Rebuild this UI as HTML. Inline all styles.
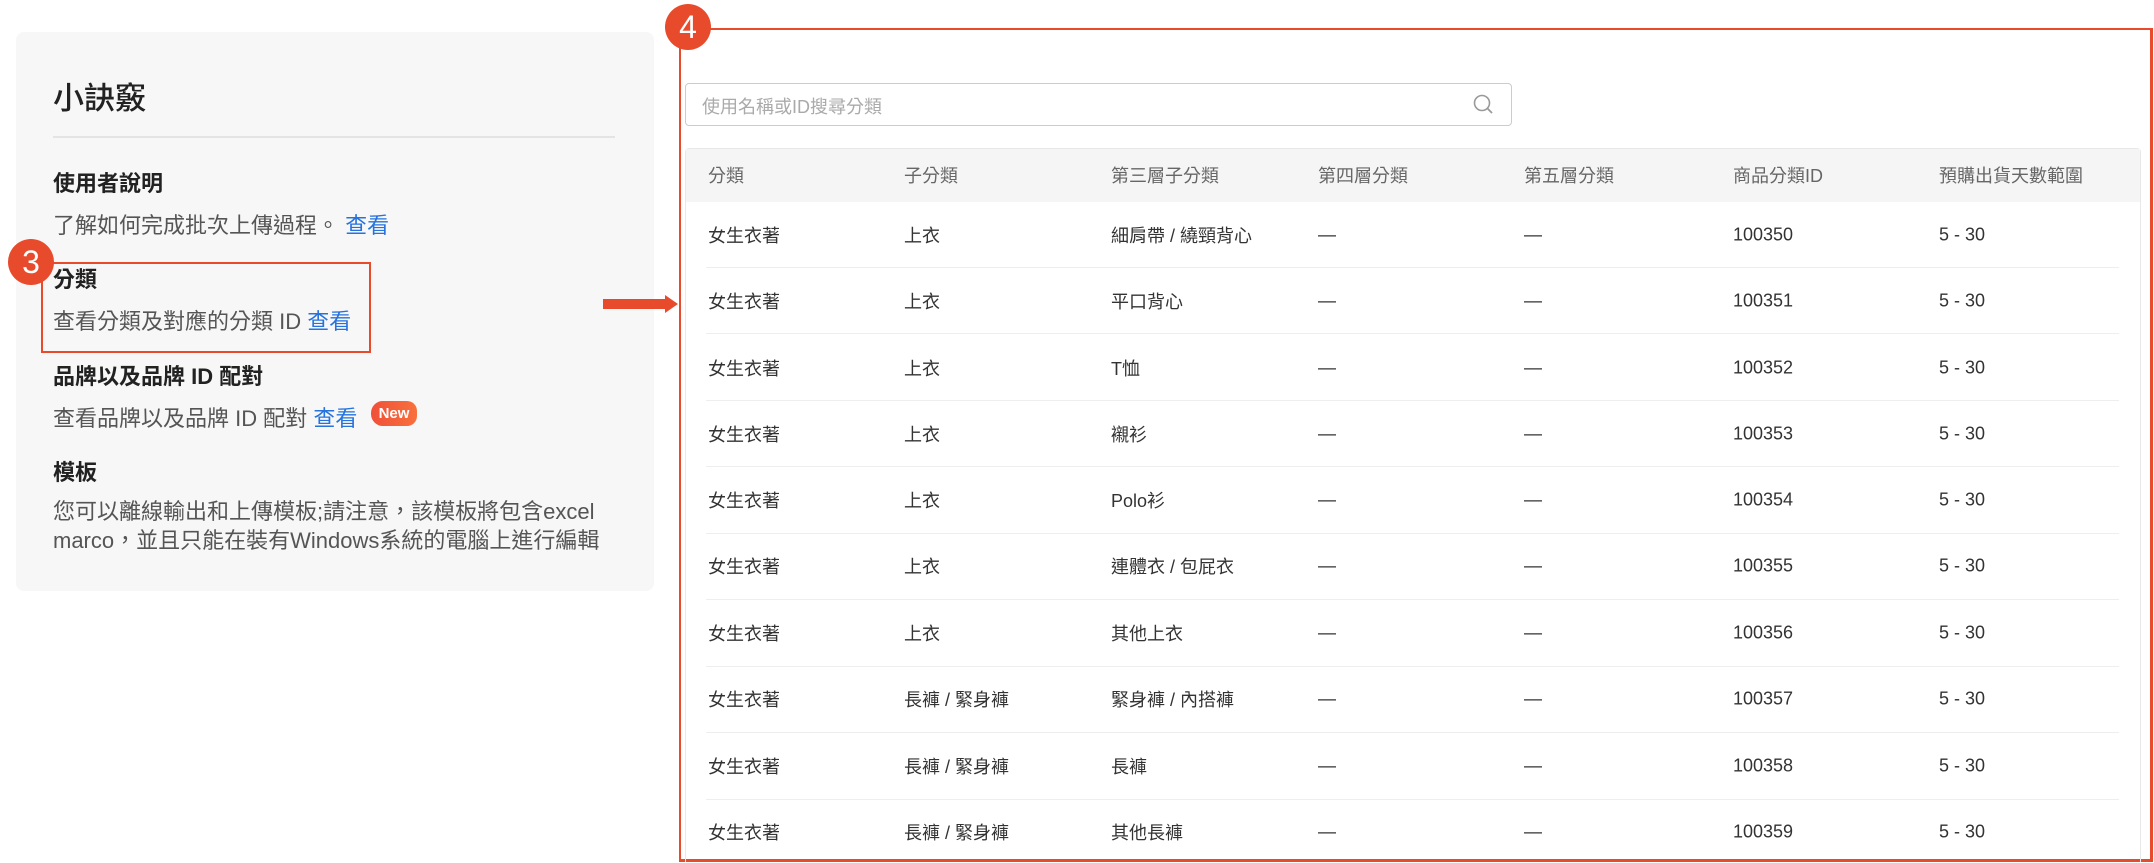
<!DOCTYPE html>
<html><head><meta charset="utf-8"><style>
*{margin:0;padding:0;box-sizing:border-box}
body{width:2154px;height:863px;background:#fff;position:relative;overflow:hidden;font-family:"Liberation Sans","Noto Sans CJK TC",sans-serif;color:#333}
.a{position:absolute;white-space:nowrap}
.panel{position:absolute;left:16px;top:32px;width:638px;height:559px;background:#f7f7f7;border-radius:8px}
.h{font-size:22px;font-weight:bold;color:#222}
.d{font-size:22px;color:#555}
.lk{color:#2673dd}
.circ{position:absolute;width:46px;height:46px;border-radius:50%;background:#e84b2c;color:#fff;font-size:32px;text-align:center;line-height:46px}
.row{position:absolute;left:706px;width:1413px;height:1px;background:#eee}
.c{position:absolute;font-size:18px;color:#333;white-space:nowrap;transform:translateY(-50%)}
.hc{color:#666}
</style></head><body>
<div class="panel"></div>
<div class="a" style="left:53px;top:73px;font-size:31px;font-weight:500;color:#222">小訣竅</div>
<div class="a" style="left:53px;top:136px;width:562px;height:2px;background:#e4e4e4"></div>
<div class="a h" style="left:53px;top:166px">使用者說明</div>
<div class="a d" style="left:53px;top:208px">了解如何完成批次上傳過程。 <span class="lk">查看</span></div>
<div class="a h" style="left:53px;top:262px">分類</div>
<div class="a d" style="left:53px;top:304px">查看分類及對應的分類 ID <span class="lk">查看</span></div>
<div class="a h" style="left:53px;top:359px">品牌以及品牌 ID 配對</div>
<div class="a d" style="left:53px;top:401px">查看品牌以及品牌 ID 配對 <span class="lk">查看</span></div>
<div class="a" style="left:371px;top:401px;width:46px;height:25px;border-radius:12px 10px 10px 12px;background:linear-gradient(90deg,#f0503a,#f8703c);color:#fff;font-size:15px;font-weight:bold;text-align:center;line-height:25px">New</div>
<div class="a h" style="left:53px;top:455px">模板</div>
<div class="a d" style="left:53px;top:497px;line-height:29px">您可以離線輸出和上傳模板;請注意，該模板將包含excel<br>marco，並且只能在裝有Windows系統的電腦上進行編輯</div>
<div class="a" style="left:41px;top:262px;width:330px;height:91px;border:2px solid #e84b2c"></div>
<div class="circ" style="left:8px;top:239px">3</div>
<div class="a" style="left:603px;top:299px;width:64px;height:10px;background:#e84b2c"></div>
<div class="a" style="left:665px;top:295px;width:0;height:0;border-top:9px solid transparent;border-bottom:9px solid transparent;border-left:13px solid #e84b2c"></div>
<div class="a" style="left:679px;top:28px;width:1474px;height:834px;border:2px solid #e84b2c;border-right-width:3px;border-bottom-width:3px"></div>
<div class="circ" style="left:665px;top:4px">4</div>
<div class="a" style="left:685px;top:83px;width:827px;height:43px;border:1px solid #ccc;border-radius:4px"></div>
<div class="a" style="left:702px;top:93px;font-size:18px;color:#aaa">使用名稱或ID搜尋分類</div>
<svg class="a" style="left:1472px;top:93px" width="24" height="24" viewBox="0 0 24 24"><circle cx="10" cy="10" r="7.5" fill="none" stroke="#999" stroke-width="1.6"/><line x1="15.5" y1="15.5" x2="20" y2="20" stroke="#999" stroke-width="1.8"/></svg>
<div class="a" style="left:685px;top:148px;width:1456px;height:714px;border:1px solid #e8e8e8;border-bottom:none;border-radius:4px 4px 0 0"></div>
<div class="a" style="left:686px;top:149px;width:1454px;height:53px;background:#f5f5f5"></div>
<div class="c hc" style="left:708px;top:175px">分類</div>
<div class="c hc" style="left:904px;top:175px">子分類</div>
<div class="c hc" style="left:1111px;top:175px">第三層子分類</div>
<div class="c hc" style="left:1318px;top:175px">第四層分類</div>
<div class="c hc" style="left:1524px;top:175px">第五層分類</div>
<div class="c hc" style="left:1733px;top:175px">商品分類ID</div>
<div class="c hc" style="left:1939px;top:175px">預購出貨天數範圍</div>
<div class="row" style="top:267px"></div><div class="row" style="top:333px"></div><div class="row" style="top:400px"></div><div class="row" style="top:466px"></div><div class="row" style="top:533px"></div><div class="row" style="top:599px"></div><div class="row" style="top:666px"></div><div class="row" style="top:732px"></div><div class="row" style="top:799px"></div>

<div class="c" style="left:708px;top:235px">女生衣著</div><div class="c" style="left:904px;top:235px">上衣</div><div class="c" style="left:1111px;top:235px">細肩帶 / 繞頸背心</div><div class="c" style="left:1318px;top:235px">—</div><div class="c" style="left:1524px;top:235px">—</div><div class="c" style="left:1733px;top:235px">100350</div><div class="c" style="left:1939px;top:235px">5 - 30</div>
<div class="c" style="left:708px;top:301px">女生衣著</div><div class="c" style="left:904px;top:301px">上衣</div><div class="c" style="left:1111px;top:301px">平口背心</div><div class="c" style="left:1318px;top:301px">—</div><div class="c" style="left:1524px;top:301px">—</div><div class="c" style="left:1733px;top:301px">100351</div><div class="c" style="left:1939px;top:301px">5 - 30</div>
<div class="c" style="left:708px;top:368px">女生衣著</div><div class="c" style="left:904px;top:368px">上衣</div><div class="c" style="left:1111px;top:368px">T恤</div><div class="c" style="left:1318px;top:368px">—</div><div class="c" style="left:1524px;top:368px">—</div><div class="c" style="left:1733px;top:368px">100352</div><div class="c" style="left:1939px;top:368px">5 - 30</div>
<div class="c" style="left:708px;top:434px">女生衣著</div><div class="c" style="left:904px;top:434px">上衣</div><div class="c" style="left:1111px;top:434px">襯衫</div><div class="c" style="left:1318px;top:434px">—</div><div class="c" style="left:1524px;top:434px">—</div><div class="c" style="left:1733px;top:434px">100353</div><div class="c" style="left:1939px;top:434px">5 - 30</div>
<div class="c" style="left:708px;top:500px">女生衣著</div><div class="c" style="left:904px;top:500px">上衣</div><div class="c" style="left:1111px;top:500px">Polo衫</div><div class="c" style="left:1318px;top:500px">—</div><div class="c" style="left:1524px;top:500px">—</div><div class="c" style="left:1733px;top:500px">100354</div><div class="c" style="left:1939px;top:500px">5 - 30</div>
<div class="c" style="left:708px;top:566px">女生衣著</div><div class="c" style="left:904px;top:566px">上衣</div><div class="c" style="left:1111px;top:566px">連體衣 / 包屁衣</div><div class="c" style="left:1318px;top:566px">—</div><div class="c" style="left:1524px;top:566px">—</div><div class="c" style="left:1733px;top:566px">100355</div><div class="c" style="left:1939px;top:566px">5 - 30</div>
<div class="c" style="left:708px;top:633px">女生衣著</div><div class="c" style="left:904px;top:633px">上衣</div><div class="c" style="left:1111px;top:633px">其他上衣</div><div class="c" style="left:1318px;top:633px">—</div><div class="c" style="left:1524px;top:633px">—</div><div class="c" style="left:1733px;top:633px">100356</div><div class="c" style="left:1939px;top:633px">5 - 30</div>
<div class="c" style="left:708px;top:699px">女生衣著</div><div class="c" style="left:904px;top:699px">長褲 / 緊身褲</div><div class="c" style="left:1111px;top:699px">緊身褲 / 內搭褲</div><div class="c" style="left:1318px;top:699px">—</div><div class="c" style="left:1524px;top:699px">—</div><div class="c" style="left:1733px;top:699px">100357</div><div class="c" style="left:1939px;top:699px">5 - 30</div>
<div class="c" style="left:708px;top:766px">女生衣著</div><div class="c" style="left:904px;top:766px">長褲 / 緊身褲</div><div class="c" style="left:1111px;top:766px">長褲</div><div class="c" style="left:1318px;top:766px">—</div><div class="c" style="left:1524px;top:766px">—</div><div class="c" style="left:1733px;top:766px">100358</div><div class="c" style="left:1939px;top:766px">5 - 30</div>
<div class="c" style="left:708px;top:832px">女生衣著</div><div class="c" style="left:904px;top:832px">長褲 / 緊身褲</div><div class="c" style="left:1111px;top:832px">其他長褲</div><div class="c" style="left:1318px;top:832px">—</div><div class="c" style="left:1524px;top:832px">—</div><div class="c" style="left:1733px;top:832px">100359</div><div class="c" style="left:1939px;top:832px">5 - 30</div>
</body></html>
